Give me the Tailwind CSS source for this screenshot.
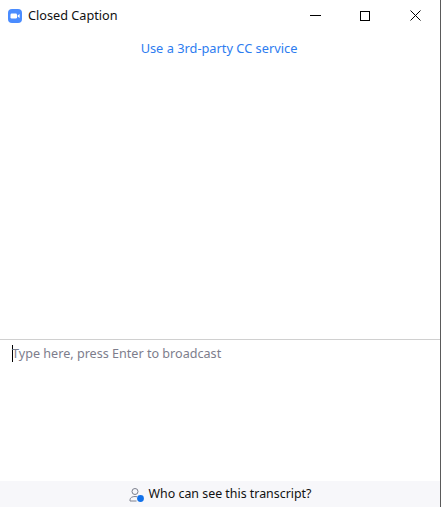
<!DOCTYPE html>
<html lang="en">
<head>
  <meta charset="UTF-8">
  <script src="https://cdn.jsdelivr.net/npm/@tailwindcss/browser@4"></script>
  <title>Closed Caption</title>
</head>
<body class="bg-white font-['Noto_Sans',sans-serif] text-[13px] overflow-hidden">
  <div class="w-[441px] h-[507px] flex flex-col border-r border-[#5a5a5a]">
    <!-- title bar -->
    <div class="h-[31px] flex items-center shrink-0">
      <svg class="ml-[8px] mr-[6px]" width="14" height="14" viewBox="0 0 14 14">
        <rect width="14" height="14" rx="4" fill="#4a8cff"/>
        <rect x="2.5" y="4.5" width="6.5" height="5" rx="1.2" fill="#fff"/>
        <path d="M9.6 6.4 L11.6 5 V9 L9.6 7.6 Z" fill="#fff"/>
      </svg>
      <span class="text-[#111] text-[12.7px]">Closed Caption</span>
      <div class="ml-auto flex items-center">
        <svg class="mr-[39px]" width="11" height="11" viewBox="0 0 11 11"><path d="M0 5.5H11" stroke="#000" stroke-width="1"/></svg>
        <svg class="mr-[40px]" width="10" height="10" viewBox="0 0 10 10"><rect x=".5" y=".5" width="9" height="9" fill="none" stroke="#000"/></svg>
        <svg class="mr-[19px]" width="11" height="11" viewBox="0 0 11 11"><path d="M.5 .5L10.5 10.5M10.5 .5L.5 10.5" stroke="#000" stroke-width="1"/></svg>
      </div>
    </div>
    <!-- caption area -->
    <div class="h-[308px] shrink-0 flex justify-center pt-[8px] pr-[2px]">
      <a class="text-[#2d7cf0] text-[12.8px] leading-[18px]">Use a 3rd-party CC service</a>
    </div>
    <!-- input -->
    <div class="flex-1 border-t border-[#d0d0d0] pl-[12px] pt-[5px]">
      <div class="flex items-start">
        <span class="w-px h-[17px] bg-black -mr-px"></span>
        <span class="text-[#7d7d8c] text-[12.6px] leading-[17px]">Type here, press Enter to broadcast</span>
      </div>
    </div>
    <!-- footer -->
    <div class="h-[26px] shrink-0 bg-[#f7f7fa] flex items-center justify-center gap-[3px] pt-[1px]">
      <svg width="17" height="16" viewBox="0 0 17 16">
        <circle cx="6" cy="4.5" r="3" fill="none" stroke="#7c808e" stroke-width="1"/>
        <path d="M1 14V12.8C1 10.6 3.5 9.5 6 9.5C6.8 9.5 7.5 9.6 8.2 9.8M1 14H7.5" fill="none" stroke="#7c808e" stroke-width="1"/>
        <circle cx="11.5" cy="11.5" r="3.4" fill="#1271ea"/>
      </svg>
      <span class="text-[#111] text-[12.4px]">Who can see this transcript?</span>
    </div>
  </div>
</body>
</html>
